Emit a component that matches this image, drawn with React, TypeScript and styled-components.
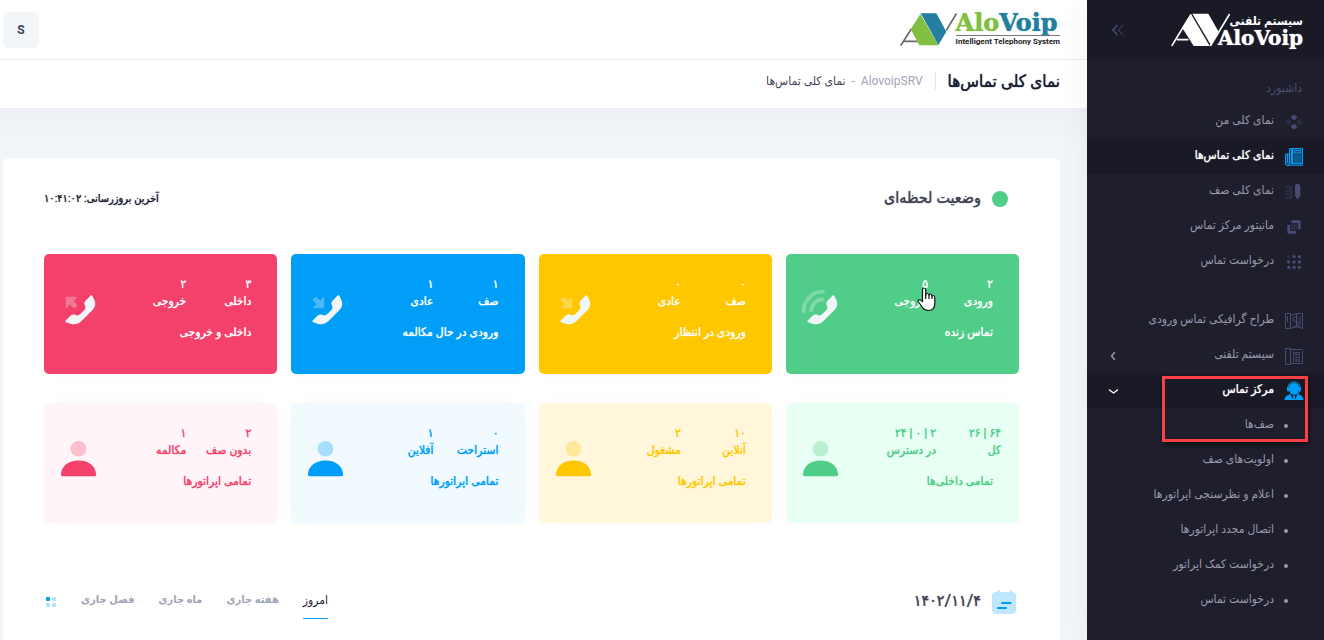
import React from 'react';
import styled, { createGlobalStyle, css } from 'styled-components';

const GlobalStyle = createGlobalStyle`
  *, *::before, *::after { box-sizing: border-box; }
  body {
    margin: 0;
    background: #f3f6f9;
    color: #3f4254;
    font-family: Roboto, 'DejaVu Sans Condensed', 'DejaVu Sans', sans-serif;
    font-size: 12px;
  }
  a { color: inherit; text-decoration: none; }
  button { border: 0; padding: 0; background: none; color: inherit; font: inherit; cursor: pointer; }
  h1, h2, p { margin: 0; }
`;

/* The Persian bold cut is very wide, so emphasis thickens the regular cut. */
const emphasis = css`
  font-weight: 400;
  text-shadow: 0 0 1px currentColor;
`;

const Page = styled.div`
  display: flex;
  min-height: 100vh;
`;

/* Sidebar */

const Sidebar = styled.aside`
  position: relative;
  z-index: 1;
  flex: none;
  width: 237px;
  background: #1f1e2c;
  color: #9899ac;
  box-shadow: 0 0 28px rgba(82, 63, 105, 0.07);
`;

const Brand = styled.div`
  display: flex;
  align-items: center;
  justify-content: space-between;
  height: 59px;
  padding: 0 21px 0 24px;
  background: #1a1a26;
`;

const BrandLogo = styled.a`
  display: flex;
  align-items: center;
  direction: ltr;
  color: #fff;
`;

const BrandWords = styled.span`
  display: flex;
  flex-direction: column;
  align-items: flex-end;
  margin-left: -12px;
`;

const BrandTag = styled.span`
  font-size: 12px;
  font-weight: 700;
  line-height: 16px;
`;

const BrandName = styled.span`
  font-family: 'DejaVu Serif', serif;
  font-size: 20px;
  font-weight: 700;
  line-height: 18px;
  text-shadow: 0 0 1px currentColor;
`;

const Toggle = styled.button`
  display: flex;
  color: #494b74;
`;

const Section = styled.h2`
  padding: 19px 22px 0;
  height: 45px;
  color: #4c4e6f;
  font-size: 12px;
  font-weight: 400;
  line-height: 20px;
`;

const Menu = styled.nav`
  display: flex;
  flex-direction: column;
`;

const MenuGroup = styled.div<{ $spaced?: boolean }>`
  position: relative;
  margin-top: ${(p) => (p.$spaced ? '24px' : '0')};
`;

const MenuLink = styled.a<{ $active?: boolean }>`
  display: grid;
  grid-template-columns: 20px 1fr 14px;
  align-items: center;
  column-gap: 10px;
  height: 35px;
  padding: 0 20px 0 19px;
  background: ${(p) => (p.$active ? '#1a1a26' : 'transparent')};
  color: ${(p) => (p.$active ? '#fff' : '#9899ac')};
  font-size: 12px;
  white-space: nowrap;
  ${(p) => p.$active && emphasis}
`;

const MenuLabel = styled.span`
  padding-bottom: 3px;
`;

const MenuIcon = styled.span<{ $active?: boolean }>`
  display: flex;
  justify-content: center;
  color: ${(p) => (p.$active ? '#009ef7' : '#494b74')};
`;

const Bullet = styled.span`
  width: 4px;
  height: 4px;
  margin-right: 16px;
  border-radius: 50%;
  background: #9899ac;
`;

const Highlight = styled.span`
  position: absolute;
  top: 3px;
  right: 16px;
  bottom: 1px;
  left: 75px;
  border: 3px solid #fa4044;
  box-shadow: 1px 3px 5px rgba(0, 0, 0, 0.5);
  pointer-events: none;
`;

/* Main column */

const Main = styled.div`
  flex: 1;
  min-width: 0;
  display: flex;
  flex-direction: column;
`;

const Header = styled.header`
  display: flex;
  align-items: center;
  justify-content: space-between;
  height: 60px;
  padding: 0 27px 0 3px;
  background: #fff;
  border-bottom: 1px solid #ebedf2;
`;

const HeaderLogo = styled.a`
  display: flex;
  align-items: center;
  direction: ltr;
`;

const LogoWords = styled.span`
  display: flex;
  flex-direction: column;
  margin-left: -1px;
`;

const LogoName = styled.span`
  color: #227f9f;
  font-family: 'DejaVu Serif', serif;
  font-size: 24px;
  font-weight: 700;
  line-height: 24px;
  text-shadow: 0 0 1px currentColor;
`;

const LogoGreen = styled.span`
  color: #80bf41;
  text-shadow: 0 0 1px currentColor;
`;

const LogoTag = styled.span`
  border-top: 1px solid #777;
  color: #222;
  font-size: 8px;
  font-weight: 700;
  line-height: 12px;
  white-space: nowrap;
`;

const UserButton = styled.button`
  width: 36px;
  height: 36px;
  border-radius: 6px;
  background: #f3f6f9;
  color: #3f4254;
  font-size: 12px;
  font-weight: 700;
`;

const Subheader = styled.div`
  display: flex;
  align-items: center;
  height: 48px;
  padding: 0 27px 6px;
  background: #fff;
`;

const PageTitle = styled.h1`
  color: #181c32;
  font-size: 17px;
  ${emphasis}
`;

const Divider = styled.span`
  width: 1px;
  height: 18px;
  margin: 0 12px;
  background: #e4e6ef;
`;

const Crumbs = styled.nav`
  display: flex;
  gap: 6px;
  color: #a1a5b7;
  font-size: 12px;
`;

const CrumbCurrent = styled.span`
  color: #3f4254;
`;

const Content = styled.main`
  flex: 1;
  display: flex;
  padding: 50px 27px 0 3px;
  background: linear-gradient(#edf0f4, #f3f6f9 42px);
`;

const Panel = styled.section`
  flex: 1;
  min-width: 0;
  padding: 0 41px;
  border-radius: 6px 6px 0 0;
  background: #fff;
`;

const PanelHead = styled.div`
  display: flex;
  align-items: center;
  justify-content: space-between;
  height: 82px;
`;

const PanelTitle = styled.h2`
  display: flex;
  align-items: center;
  gap: 11px;
  font-size: 16px;
  ${emphasis}
`;

const TitleSlot = styled.span`
  display: flex;
  justify-content: flex-end;
  width: 27px;
`;

const TitleText = styled.span`
  padding-bottom: 3px;
`;

const Dot = styled.span`
  width: 16px;
  height: 16px;
  border-radius: 50%;
  background: #50cd89;
`;

const Updated = styled.span`
  padding-bottom: 2px;
  color: #181c32;
  font-size: 11px;
  ${emphasis}
`;

const Cards = styled.div`
  display: grid;
  grid-template-columns: repeat(4, minmax(0, 1fr));
  gap: 29px 14px;
  margin-top: 14px;
`;

const Card = styled.article<{ $bg: string; $ink: string }>`
  position: relative;
  display: flex;
  justify-content: space-between;
  align-items: flex-start;
  min-height: 120px;
  padding: 22px 26px 0 11px;
  border-radius: 5px;
  background: ${(p) => p.$bg};
  color: ${(p) => p.$ink};
  box-shadow: 0 0 20px rgba(76, 87, 125, 0.02);
  font-size: 12px;
  line-height: 17px;
  white-space: nowrap;
  ${emphasis}
`;

const Figures = styled.div<{ $wide?: boolean }>`
  display: grid;
  grid-template-columns: 65px auto;
  justify-content: start;
  margin-right: ${(p) => (p.$wide ? '-8px' : '0')};
`;

const Figure = styled.div`
  display: flex;
  flex-direction: column;
`;

const CardTitle = styled.p`
  margin-top: 14px;
`;

const CardIcon = styled.span<{ $ink: string }>`
  display: flex;
  margin-top: 10px;
  color: ${(p) => p.$ink};
`;

const Pointer = styled.svg`
  position: absolute;
  top: 33px;
  left: 131px;
`;

const DateRow = styled.div`
  display: flex;
  align-items: center;
  justify-content: space-between;
  height: 78px;
  margin-top: 40px;
`;

const Tabs = styled.div`
  display: flex;
  align-items: center;
  gap: 24px;
`;

const Tab = styled.button<{ $active?: boolean }>`
  height: 34px;
  padding-bottom: 4px;
  border-bottom: 1px solid ${(p) => (p.$active ? '#009ef7' : 'transparent')};
  color: ${(p) => (p.$active ? '#181c32' : '#a1a5b7')};
  font-size: ${(p) => (p.$active ? '12px' : '11px')};
  font-weight: ${(p) => (p.$active ? 400 : 700)};
`;

/* Drawings */

const Svg = ({ size = 19, children }: { size?: number; children: React.ReactNode }) => (
  <svg width={size} height={size} viewBox="0 0 24 24" fill="currentColor" aria-hidden="true">{children}</svg>
);

const phoneBody =
  'M13.08,14.784 L15.284,12.58 C15.893,11.971 16.044,11.041 15.659,10.271 L15.534,10.022 C15.149,9.252 15.3,8.322 15.908,7.713 L18.641,4.98 C18.836,4.785 19.153,4.785 19.348,4.98 C19.386,5.018 19.418,5.062 19.442,5.11 L20.546,7.318 C21.39,9.007 21.059,11.047 19.724,12.383 L13.725,18.381 C12.272,19.835 10.122,20.342 8.172,19.692 L5.757,18.888 C5.495,18.8 5.354,18.517 5.441,18.255 C5.465,18.181 5.507,18.115 5.562,18.06 L8.213,15.408 C8.822,14.8 9.752,14.649 10.522,15.034 L10.771,15.159 C11.541,15.544 12.471,15.393 13.08,14.784 Z';
const ringWaves =
  'M14.148,6.007 L13.957,7.998 C12.478,7.856 11.01,8.369 9.939,9.439 C8.872,10.506 8.359,11.969 8.497,13.443 L6.505,13.628 C6.313,11.568 7.033,9.517 8.525,8.025 C10.022,6.528 12.081,5.808 14.148,6.007 Z M14.498,2.022 L14.313,4.014 C11.662,3.767 9.03,4.692 7.111,6.611 C5.194,8.527 4.27,11.155 4.513,13.802 L2.521,13.985 C2.225,10.752 3.356,7.538 5.697,5.197 C8.041,2.852 11.261,1.722 14.498,2.022 Z';
const arrowIn = 'M11.6,5.9 V11.1 Q11.6,11.6 11.1,11.6 H5.9 Q5.5,11.3 5.9,10.9 L7.6,9.4 L5.7,7.5 Q5.4,7.1 5.7,6.8 L6.9,5.7 Q7.2,5.4 7.5,5.7 L9.4,7.6 L11,5.8 Q11.4,5.5 11.6,5.9 Z';

const PhoneIcon = ({ mark }: { mark: 'ring' | 'in' | 'out' }) => (
  <Svg size={46}>
    <path d={phoneBody} />
    {mark === 'ring' && <path d={ringWaves} opacity="0.3" />}
    {mark === 'in' && <path d={arrowIn} opacity="0.3" />}
    {mark === 'out' && <path d={arrowIn} opacity="0.3" transform="rotate(180 8.6 8.6)" />}
  </Svg>
);

const PersonIcon = () => (
  <Svg size={47}>
    <circle cx="12" cy="7" r="4" opacity="0.3" />
    <path d="M3,20.2 C3.388,15.427 7.262,13 11.983,13 C16.771,13 20.705,15.293 20.998,20.2 C21.01,20.395 20.998,21 20.247,21 H3.728 C3.477,21 2.98,20.459 3,20.2 Z" />
  </Svg>
);

const DiamondsIcon = () => (
  <Svg size={16}>
    <path d="M12,3 L14.5,5 L12,7 L9.5,5 Z M12,17 L14.5,19 L12,21 L9.5,19 Z" stroke="currentColor" strokeWidth="4" strokeLinejoin="round" />
    <path d="M4,10 L6,12 L4,14 L2,12 Z M20,10 L22,12 L20,14 L18,12 Z" opacity="0.35" stroke="currentColor" strokeWidth="4" strokeLinejoin="round" />
  </Svg>
);

const DeskPhoneIcon = ({ filled }: { filled?: boolean }) => (
  <svg width="20" height="20" viewBox="0 0 20 20" fill="none" stroke="currentColor" aria-hidden="true">
    {filled ? (
      <>
        <path d="M5.5,1.5 H18.5 V18.5 H3.5 Q1.5,18.5 1.5,16.5 V7.5 H5.5 Z" fill="currentColor" fillOpacity="0.35" stroke="none" />
        <path d="M5.5,1.5 H18.5 V16.5 H7 M5.5,1.5 V16 M5.5,7 H1.5 V17 Q2,18.5 3.5,18.5 T5.5,16 M3.5,7 V16" />
        <path d="M8,2 V16" strokeWidth="2" />
        <path d="M10.5,3.5 H16.5 V6 H10.5 Z" />
        <path d="M10.5,9 H17 M10.5,11 H17 M10.5,13 H17 M10.5,15 H17" strokeDasharray="1 1" />
        <path d="M3,18.5 H18.5 V16.5" opacity="0.7" />
      </>
    ) : (
      <>
        <path d="M1.5,2.5 H6.5 V18.5 H1.5 Z M6.5,3.5 H17.5 Q18.5,3.5 18.5,4.5 V17.5 H6.5" />
        <path d="M9.5,6.5 H15.5 V8.5 H9.5 Z" />
        <path d="M9,11 H16 M9,13 H16 M9,15 H16" strokeWidth="1.3" strokeDasharray="1.6 1" />
      </>
    )}
  </svg>
);

const RulerPencilIcon = () => (
  <Svg size={16}>
    <path d="M15,3 Q17.5,-1 20,3 V17 L17.5,21 L15,17 Z" stroke="currentColor" strokeWidth="3" strokeLinejoin="round" />
    <path d="M0,3 H10 V22 H0 V19.5 H5 V17.5 H0 V14 H5 V12 H0 V8.5 H5 V6.5 H0 Z" opacity="0.3" />
  </Svg>
);

const FramesIcon = () => (
  <Svg size={16}>
    <path d="M8,2 H20 Q22,2 22,4 V15 H18 V6 H8 Z" />
    <path d="M6,9 V18 H15 V22 H4 Q2,22 2,20 V9 Z" />
    <rect x="7" y="7" width="10" height="10" opacity="0.3" />
  </Svg>
);

const DotsIcon = () => (
  <Svg size={16}>
    {[4, 12, 20].map((y) => [4, 12, 20].map((x) => (
      <circle key={`${x}-${y}`} cx={x} cy={y} r="2.5" opacity={x === 4 && y === 4 ? 0.3 : 1} />
    )))}
  </Svg>
);

const FlowIcon = () => (
  <svg width="20" height="20" viewBox="0 0 20 20" fill="none" stroke="currentColor" aria-hidden="true">
    <path d="M1.5,2.5 H6.5 V17.5 H1.5 Z M6.5,4.5 L12.5,2.5 V15.5 L6.5,17.5 M12.5,2.5 H18.5 V17.5 L12.5,15.5" />
    <path d="M14,7 Q9,5 9,8 T12,10.5 T14,14 T9,14.5 M16,5 V16 M3.5,5 V11" />
  </svg>
);

const AgentIcon = () => (
  <svg width="20" height="20" viewBox="0 0 20 20" fill="currentColor" aria-hidden="true">
    <path d="M5,8 Q4.5,2 10,2 T15,8 Q14.6,13.5 10,13.7 T5,8 Z" />
    <path d="M4,9 Q3.5,1 10,1 T16,9" fill="none" stroke="currentColor" />
    <rect x="3" y="6" width="2.5" height="4.5" rx="1" />
    <rect x="14.5" y="6" width="2.5" height="4.5" rx="1" />
    <path d="M15.8,10 Q15,13 11.5,13" fill="none" stroke="currentColor" />
    <path d="M0.5,19 Q0.5,14.5 6.5,13 L9,19 Z M19.5,19 Q19.5,14.5 13.5,13 L11,19 Z M8.5,14.5 H11.5 L10.8,16 L11.3,19 H8.7 L9.2,16 Z" />
  </svg>
);

const CalendarIcon = () => (
  <svg width="24" height="24" viewBox="0 0 24 24" fill="#bfe7ff" aria-hidden="true">
    <rect x="0" y="2" width="24" height="22" rx="4" />
    <rect x="5" y="0" width="3" height="5" rx="1.5" />
    <rect x="17" y="0" width="3" height="5" rx="1.5" />
    <path d="M10,13 H18.5 M6,18 H14" stroke="#009ef7" strokeWidth="2.2" strokeLinecap="round" />
  </svg>
);

const TilesIcon = () => (
  <svg width="13" height="10" viewBox="0 0 13 10" fill="#009ef7" aria-hidden="true">
    <rect x="2" y="0" width="4" height="4" rx="1" />
    <rect x="8" y="0" width="4" height="4" rx="1" opacity="0.3" />
    <rect x="2" y="6" width="4" height="4" rx="1" opacity="0.3" />
    <rect x="8" y="6" width="4" height="4" rx="1" opacity="0.3" />
  </svg>
);

const HeaderMark = () => (
  <svg width="57" height="33" viewBox="0 0 171 99" aria-hidden="true">
    <path d="M2,98 L34,48 M13,85 H52" stroke="#666" strokeWidth="5" fill="none" />
    <path d="M61,3 L32,49 L58,97 H115 Z" fill="#80bf41" />
    <path d="M62,1 H109 L139,56 L115,96 Z" fill="#227f9f" />
    <path d="M139,52 L169,2" stroke="#666" strokeWidth="5" />
  </svg>
);

const SidebarMark = () => (
  <svg width="59" height="34" viewBox="0 0 177 102" fill="#fff" aria-hidden="true">
    <path d="M2,99 L60,4 M18,80 H52" stroke="#fff" strokeWidth="5" />
    <path d="M60,3 L34,45 L68,99 H116 Z" />
    <path d="M64,2 H112 L142,55 L120,97 Z" />
    <path d="M118,99 L176,3" stroke="#fff" strokeWidth="5" />
  </svg>
);

const Chevron = ({ open }: { open?: boolean }) => (
  <svg width="14" height="14" viewBox="0 0 14 14" fill="none" stroke="currentColor" strokeWidth="1.5" strokeLinecap="round" strokeLinejoin="round" aria-hidden="true">
    <path d={open ? 'M3.5,6 L7.5,9 L11.5,6' : 'M8.5,3.5 L5.5,7 L8.5,10.5'} />
  </svg>
);

/* Data */

const topItems = [
  { label: 'نمای کلی من', icon: <DiamondsIcon /> },
  { label: 'نمای کلی تماس‌ها', icon: <DeskPhoneIcon filled />, active: true },
  { label: 'نمای کلی صف', icon: <RulerPencilIcon /> },
  { label: 'مانیتور مرکز تماس', icon: <FramesIcon /> },
  { label: 'درخواست تماس', icon: <DotsIcon /> },
];

const subItems = ['اولویت‌های صف', 'اعلام و نظرسنجی اپراتورها', 'اتصال مجدد اپراتورها', 'درخواست کمک اپراتور', 'درخواست تماس'];

type CardData = {
  bg: string; ink: string; iconInk: string; icon: React.ReactNode;
  figures: [string, string][]; title: string; wide?: boolean; pointer?: boolean;
};

const cards: CardData[] = [
  { bg: '#50cd89', ink: '#fff', iconInk: '#f3f6f9', icon: <PhoneIcon mark="ring" />, figures: [['۲', 'ورودی'], ['۵', 'خروجی']], title: 'تماس زنده', pointer: true },
  { bg: '#ffc700', ink: '#fff', iconInk: '#f3f6f9', icon: <PhoneIcon mark="in" />, figures: [['۰', 'صف'], ['۰', 'عادی']], title: 'ورودی در انتظار' },
  { bg: '#009ef7', ink: '#fff', iconInk: '#f3f6f9', icon: <PhoneIcon mark="in" />, figures: [['۱', 'صف'], ['۱', 'عادی']], title: 'ورودی در حال مکالمه' },
  { bg: '#f4416c', ink: '#fff', iconInk: '#f3f6f9', icon: <PhoneIcon mark="out" />, figures: [['۳', 'داخلی'], ['۲', 'خروجی']], title: 'داخلی و خروجی' },
  { bg: '#e8fff3', ink: '#50cd89', iconInk: '#50cd89', icon: <PersonIcon />, figures: [['۶۴ | ۲۶', 'کل'], ['۲ | ۰ | ۲۴', 'در دسترس']], title: 'تمامی داخلی‌ها', wide: true },
  { bg: '#fff6dc', ink: '#ffc700', iconInk: '#ffc700', icon: <PersonIcon />, figures: [['۱۰', 'آنلاین'], ['۲', 'مشغول']], title: 'تمامی اپراتورها' },
  { bg: '#f1faff', ink: '#009ef7', iconInk: '#009ef7', icon: <PersonIcon />, figures: [['۰', 'استراحت'], ['۱', 'آفلاین']], title: 'تمامی اپراتورها' },
  { bg: '#fff5f8', ink: '#f4416c', iconInk: '#f4416c', icon: <PersonIcon />, figures: [['۲', 'بدون صف'], ['۱', 'مکالمه']], title: 'تمامی اپراتورها' },
];

const tabs = ['امروز', 'هفته جاری', 'ماه جاری', 'فصل جاری'];

export default function App() {
  return (
    <Page dir="rtl" lang="fa">
      <GlobalStyle />
      <Sidebar>
        <Brand>
          <BrandLogo href="#">
            <SidebarMark />
            <BrandWords>
              <BrandTag dir="rtl">سیستم تلفنی</BrandTag>
              <BrandName>AloVoip</BrandName>
            </BrandWords>
          </BrandLogo>
          <Toggle type="button" aria-label="بستن منو">
            <svg width="14" height="14" viewBox="0 0 14 14" fill="none" stroke="currentColor" strokeWidth="1.5" aria-hidden="true">
              <path d="M6.5,2 L2,7 L6.5,12" />
              <path d="M12,2 L7.5,7 L12,12" opacity="0.5" />
            </svg>
          </Toggle>
        </Brand>
        <Section>داشبورد</Section>
        <Menu>
          <MenuGroup>
            {topItems.map((item) => (
              <MenuLink key={item.label} href="#" $active={item.active}>
                <MenuIcon $active={item.active}>{item.icon}</MenuIcon>
                <MenuLabel>{item.label}</MenuLabel>
              </MenuLink>
            ))}
          </MenuGroup>
          <MenuGroup $spaced>
            <MenuLink href="#">
              <MenuIcon><FlowIcon /></MenuIcon>
              <MenuLabel>طراح گرافیکی تماس ورودی</MenuLabel>
            </MenuLink>
            <MenuLink href="#">
              <MenuIcon><DeskPhoneIcon /></MenuIcon>
              <MenuLabel>سیستم تلفنی</MenuLabel>
              <Chevron />
            </MenuLink>
          </MenuGroup>
          <MenuGroup>
            <MenuLink href="#" $active>
              <MenuIcon $active><AgentIcon /></MenuIcon>
              <MenuLabel>مرکز تماس</MenuLabel>
              <Chevron open />
            </MenuLink>
            <MenuLink href="#">
              <Bullet />
              <MenuLabel>صف‌ها</MenuLabel>
            </MenuLink>
            <Highlight />
          </MenuGroup>
          <MenuGroup>
            {subItems.map((label) => (
              <MenuLink key={label} href="#">
                <Bullet />
                <MenuLabel>{label}</MenuLabel>
              </MenuLink>
            ))}
          </MenuGroup>
        </Menu>
      </Sidebar>
      <Main>
        <Header>
          <HeaderLogo href="#">
            <HeaderMark />
            <LogoWords>
              <LogoName><LogoGreen>Alo</LogoGreen>Voip</LogoName>
              <LogoTag>Intelligent Telephony System</LogoTag>
            </LogoWords>
          </HeaderLogo>
          <UserButton type="button">S</UserButton>
        </Header>
        <Subheader>
          <PageTitle>نمای کلی تماس‌ها</PageTitle>
          <Divider />
          <Crumbs>
            <a href="#">AlovoipSRV</a>
            <span>-</span>
            <CrumbCurrent>نمای کلی تماس‌ها</CrumbCurrent>
          </Crumbs>
        </Subheader>
        <Content>
          <Panel>
            <PanelHead>
              <PanelTitle><TitleSlot><Dot /></TitleSlot><TitleText>وضعیت لحظه‌ای</TitleText></PanelTitle>
              <Updated>آخرین بروزرسانی: ۱۰:۴۱:۰۲</Updated>
            </PanelHead>
            <Cards>
              {cards.map((card, i) => (
                <Card key={i} $bg={card.bg} $ink={card.ink}>
                  <div>
                    <Figures $wide={card.wide}>
                      {card.figures.map(([value, label]) => (
                        <Figure key={label}>
                          <span>{value}</span>
                          <span>{label}</span>
                        </Figure>
                      ))}
                    </Figures>
                    <CardTitle>{card.title}</CardTitle>
                  </div>
                  <CardIcon $ink={card.iconInk}>{card.icon}</CardIcon>
                  {card.pointer && (
                    <Pointer width="19" height="25" viewBox="0 0 19 25" fill="#fff" stroke="#111" strokeWidth="1.2" strokeLinejoin="round" aria-hidden="true">
                      <path d="M5.5,14.5 V3 Q5.5,1 7,1 T8.7,3 V8.5 Q8.7,6.5 10.2,6.5 T12,8.5 Q12,7 13.3,7 T15,9.5 Q15,8.5 16.3,8.5 T17.8,10.5 V16.5 Q17.8,23.5 11.5,23.5 Q7.5,23.5 5.5,20.5 L1.5,15 Q0.5,13.2 2,12.8 T5.5,14.5 Z" />
                      <path d="M8.7,8 V12 M12,8.5 V12 M15,9.5 V12" fill="none" />
                    </Pointer>
                  )}
                </Card>
              ))}
            </Cards>
            <DateRow>
              <PanelTitle><TitleSlot><CalendarIcon /></TitleSlot><TitleText>۱۴۰۲/۱۱/۴</TitleText></PanelTitle>
              <Tabs>
                {tabs.map((tab, i) => (
                  <Tab key={tab} type="button" $active={i === 0}>{tab}</Tab>
                ))}
                <TilesIcon />
              </Tabs>
            </DateRow>
          </Panel>
        </Content>
      </Main>
    </Page>
  );
}
